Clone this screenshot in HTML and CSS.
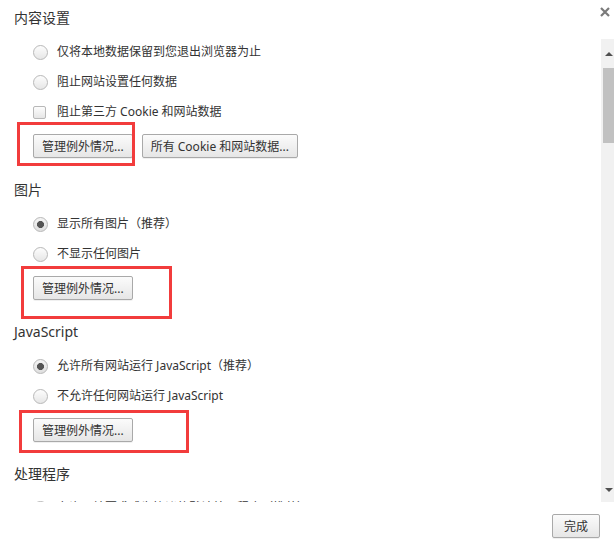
FILE: index.html
```html
<!DOCTYPE html>
<html lang="zh-CN">
<head>
    <meta charset="UTF-8">
    <title>内容设置</title>
    <link rel="stylesheet" href="styles.css">
</head>
<body>
    <div class="dialog">
        <div class="head">
            <span class="head-title">内容设置</span>
            <svg class="close" width="10" height="10" viewBox="0 0 10 10"><path d="M1 1L9 9M9 1L1 9" stroke="#7a7a7a" stroke-width="2.2"/></svg>
        </div>
        <div class="body">
            <div class="content">
                <div class="section first">
                    <div class="options">
                        <label class="row"><input type="radio" name="cookie"><span>仅将本地数据保留到您退出浏览器为止</span></label>
                        <label class="row"><input type="radio" name="cookie"><span>阻止网站设置任何数据</span></label>
                        <label class="row"><input type="checkbox"><span>阻止第三方 Cookie 和网站数据</span></label>
                    </div>
                    <div class="actions">
                        <button type="button">管理例外情况...</button>
                        <button type="button">所有 Cookie 和网站数据...</button>
                        <span class="mark mark-1"></span>
                    </div>
                </div>
                <div class="section">
                    <div class="section-title">图片</div>
                    <div class="options">
                        <label class="row"><input type="radio" name="img" checked><span>显示所有图片（推荐）</span></label>
                        <label class="row"><input type="radio" name="img"><span>不显示任何图片</span></label>
                    </div>
                    <div class="actions">
                        <button type="button">管理例外情况...</button>
                        <span class="mark mark-2"></span>
                    </div>
                </div>
                <div class="section">
                    <div class="section-title">JavaScript</div>
                    <div class="options">
                        <label class="row"><input type="radio" name="js" checked><span>允许所有网站运行 JavaScript（推荐）</span></label>
                        <label class="row"><input type="radio" name="js"><span>不允许任何网站运行 JavaScript</span></label>
                    </div>
                    <div class="actions">
                        <button type="button">管理例外情况...</button>
                        <span class="mark mark-3"></span>
                    </div>
                </div>
                <div class="section">
                    <div class="section-title">处理程序</div>
                    <div class="options">
                        <label class="row"><input type="radio" name="handler" checked><span>允许网站要求成为协议的默认处理程序（推荐）</span></label>
                    </div>
                </div>
            </div>
            <div class="scrollbar">
                <span class="arrow up"></span>
                <span class="thumb"></span>
                <span class="track"></span>
                <span class="arrow down"></span>
            </div>
        </div>
        <div class="foot">
            <button type="button" class="done">完成</button>
        </div>
    </div>
</body>
</html>
```
FILE: styles.css
```css
*{
    box-sizing: border-box;
}
body{
    margin: 0;
    background: #fff;
    color: #333;
    font-family: "Noto Sans", "Noto Sans CJK SC", sans-serif;
    font-size: 12px;
}
.dialog{
    width: 614px;
    height: 548px;
    display: flex;
    flex-direction: column;
}
.head{
    height: 39px;
    display: flex;
    justify-content: space-between;
    padding: 8px 4px 0 14px;
}
.head-title{
    font-size: 14px;
    line-height: 20px;
}
.close{
    margin-top: -1px;
}
.body{
    height: 463px;
    display: flex;
}
.content{
    flex: 1;
    overflow: hidden;
    padding: 3px 0 0 14px;
}
.section{
    margin-top: 22px;
    &.first{
        margin-top: 0;
    }
}
.section-title{
    font-size: 14px;
    line-height: 20px;
    margin-bottom: 14px;
}
.options{
    display: flex;
    flex-direction: column;
    gap: 10px;
    padding-left: 19px;
}
.row{
    height: 20px;
    display: flex;
    align-items: center;
    white-space: nowrap;
    & span{
        line-height: 20px;
    }
}
input[type="radio"], input[type="checkbox"]{
    appearance: none;
    margin: 0 9px 0 0;
    width: 15px;
    height: 15px;
    border: 1px solid #b8b8b8;
    background: linear-gradient(#fdfdfd, #e6e6e6);
    flex: none;
}
input[type="radio"]{
    border-radius: 50%;
    &:checked{
        background: radial-gradient(circle, #555 0 3.2px, transparent 3.8px), linear-gradient(#f5f5f5, #dedede);
    }
}
input[type="checkbox"]{
    width: 13px;
    height: 13px;
    border-radius: 2px;
    margin-right: 11px;
}
.actions{
    position: relative;
    margin: 12px 0 0 19px;
    display: flex;
    gap: 9px;
}
button{
    height: 24px;
    padding: 0 8px;
    font: inherit;
    color: #333;
    border: 1px solid #a9a9a9;
    border-radius: 2px;
    background: linear-gradient(#fbfbfb, #e6e6e6);
    box-shadow: 0 1px 0 rgba(0,0,0,.06);
}
.mark{
    position: absolute;
    border: 3px solid #f23c3c;
    pointer-events: none;
}
.mark-1{
    left: -16px;
    top: -12px;
    width: 118px;
    height: 44px;
}
.mark-2{
    left: -12px;
    top: -10px;
    width: 151px;
    height: 53px;
}
.mark-3{
    left: -14px;
    top: -8px;
    width: 170px;
    height: 43px;
}
.scrollbar{
    width: 13px;
    background: #f1f1f1;
    display: flex;
    flex-direction: column;
    align-items: flex-end;
}
.arrow{
    width: 11px;
    height: 29px;
    display: flex;
    justify-content: center;
    align-items: center;
    &::before{
        content: "";
        border-left: 4px solid transparent;
        border-right: 4px solid transparent;
    }
    &.up::before{
        border-bottom: 4px solid #505050;
    }
    &.down{
        height: 24px;
        &::before{
            border-bottom: none;
            border-top: 4px solid #505050;
        }
    }
}
.thumb{
    width: 11px;
    height: 75px;
    background: #c1c1c1;
}
.track{
    flex: 1;
}
.foot{
    flex: 1;
    display: flex;
    justify-content: flex-end;
    padding: 12px 14px 0 0;
}
.done{
    width: 48px;
    padding: 0;
}
```
